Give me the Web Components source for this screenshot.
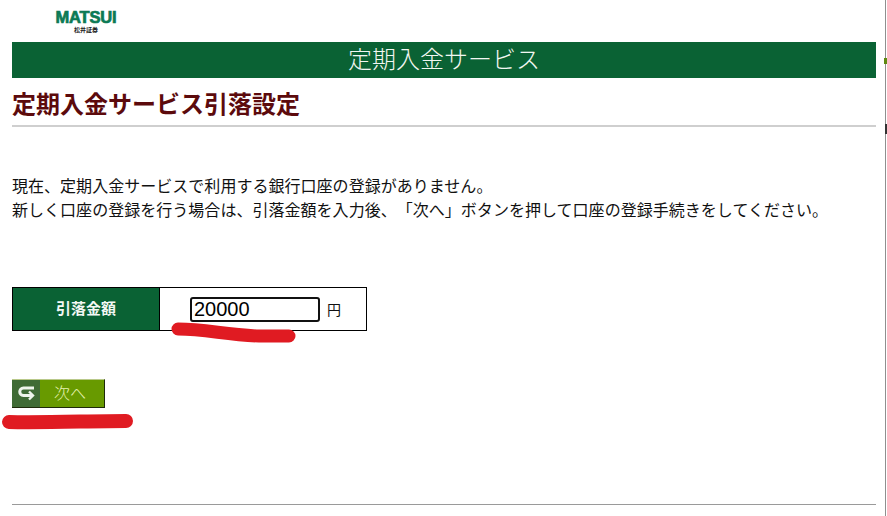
<!DOCTYPE html>
<html lang="ja">
<head>
<meta charset="utf-8">
<title>定期入金サービス引落設定</title>
<style>
  html, body { margin: 0; background: #fff; }
  body { font-family: "Liberation Sans", "Noto Sans CJK JP", sans-serif; color: #111; overflow: hidden; }
</style>
</head>
<body>
<deposit-page>
  <matsui-logo></matsui-logo>
  <service-banner>定期入金サービス</service-banner>
  <section-title>定期入金サービス引落設定</section-title>
  <notice-text>
    現在、定期入金サービスで利用する銀行口座の登録がありません。<br>
    新しく口座の登録を行う場合は、引落金額を入力後、「次へ」ボタンを押して口座の登録手続きをしてください。
  </notice-text>
  <amount-form label="引落金額" value="20000" unit="円"></amount-form>
  <next-button>次へ</next-button>
</deposit-page>

<script>
class DepositPage extends HTMLElement {
  constructor() {
    super();
    this.attachShadow({ mode: 'open' });
    this.shadowRoot.innerHTML = `
      <style>
        :host { display: block; position: relative; width: 887px; height: 516px; box-sizing: border-box; padding: 0 11px 0 12px; text-spacing-trim: space-all; }
        .foot { position: absolute; left: 12px; right: 11px; top: 504px; height: 1px; background: #9a9a9a; }
        .edge { position: absolute; left: 885px; top: 0; width: 1px; height: 516px; background: #8f8f8f; }
        .blip { position: absolute; left: 884px; top: 58px; width: 3px; height: 6px; background: #5f8a10; }
        .blip2 { position: absolute; left: 885px; top: 124px; width: 2px; height: 10px; background: #333; }
      </style>
      <slot></slot>
      <div class="foot"></div>
      <div class="edge"></div>
      <div class="blip"></div>
      <div class="blip2"></div>
    `;
  }
}

class MatsuiLogo extends HTMLElement {
  constructor() {
    super();
    this.attachShadow({ mode: 'open' });
    this.shadowRoot.innerHTML = `
      <style>
        :host { display: flex; flex-direction: column; align-items: center; width: 62px; height: 42px; margin-left: 43px; box-sizing: border-box; padding-top: 9px; }
        .name { font: 900 16.500px/16px "Liberation Sans", sans-serif; color: #0c7a55; -webkit-text-stroke: .7px #0c7a55; letter-spacing: -.2px; }
        .sub { font: 700 6px/6px "Noto Sans CJK JP", sans-serif; color: #222; margin-top: 2px; }
      </style>
      <div class="name">MATSUI</div>
      <div class="sub">松井証券</div>
    `;
  }
}

class ServiceBanner extends HTMLElement {
  constructor() {
    super();
    this.attachShadow({ mode: 'open' });
    this.shadowRoot.innerHTML = `
      <style>
        :host { display: flex; align-items: center; justify-content: center; height: 36px; box-sizing: border-box; padding-bottom: 5px; background: #0a6234; color: #f2f7f2; font: 300 24px/31px "Noto Sans CJK JP", sans-serif; }
      </style>
      <slot></slot>
    `;
  }
}

class SectionTitle extends HTMLElement {
  constructor() {
    super();
    this.attachShadow({ mode: 'open' });
    this.shadowRoot.innerHTML = `
      <style>
        :host { display: block; height: 49px; box-sizing: border-box; border-bottom: 2px solid #cfcfcf; color: #5c0a0c; font: 700 24px/49px "Noto Sans CJK JP", sans-serif; }
      </style>
      <slot></slot>
    `;
  }
}

class NoticeText extends HTMLElement {
  constructor() {
    super();
    this.attachShadow({ mode: 'open' });
    this.shadowRoot.innerHTML = `
      <style>
        :host { display: block; margin-top: 46px; font: 400 16px/24px "Noto Sans CJK JP", sans-serif; letter-spacing: .03px; color: #111; white-space: nowrap; }
      </style>
      <slot></slot>
    `;
  }
}

class AmountForm extends HTMLElement {
  constructor() {
    super();
    this.attachShadow({ mode: 'open' });
    const label = this.getAttribute('label');
    const value = this.getAttribute('value');
    const unit = this.getAttribute('unit');
    this.shadowRoot.innerHTML = `
      <style>
        :host { display: block; position: relative; width: 355px; margin-top: 66px; }
        .row { display: flex; height: 44px; box-sizing: border-box; border: 1px solid #000; }
        .label { width: 146px; background: #0a6234; color: #f4f8f4; font: 700 15px/40px "Noto Sans CJK JP", sans-serif; text-align: center; border-right: 1px solid #000; }
        .cell { display: flex; align-items: center; gap: 7px; padding-left: 30px; font: 400 14px "Noto Sans CJK JP", sans-serif; }
        input { box-sizing: border-box; width: 130px; height: 25px; margin: 0; padding: 0 2px; border: 2px solid #111; border-radius: 3px; font: 400 20px "Liberation Sans", sans-serif; color: #000; outline: none; }
        svg { position: absolute; left: 159px; top: 34px; }
      </style>
      <div class="row">
        <div class="label">${label}</div>
        <div class="cell"><input type="text" value="${value}"><span>${unit}</span></div>
      </div>
      <svg width="130" height="24" viewBox="0 0 130 24"><path d="M7 8 C35 8 55 14 88 15 L118 15" fill="none" stroke="#e01b22" stroke-width="13" stroke-linecap="round"/></svg>
    `;
  }
}

class NextButton extends HTMLElement {
  constructor() {
    super();
    this.attachShadow({ mode: 'open' });
    this.shadowRoot.innerHTML = `
      <style>
        :host { display: block; position: relative; width: 93px; margin-top: 48px; }
        .btn { display: flex; height: 29px; box-sizing: border-box; border-top: 1px solid #b9c98a; border-right: 1px solid #1d2a0a; border-bottom: 1px solid #1d2a0a; }
        .ic { display: flex; align-items: center; justify-content: center; width: 28px; background: #3f6b35; }
        .txt { flex: 1; background: #689a00; color: #e6f2b0; font: 300 16px/24px "Noto Sans CJK JP", sans-serif; text-align: center; padding-right: 4px; }
        .mark { position: absolute; left: -11px; top: 33px; }
      </style>
      <div class="btn">
        <div class="ic"><svg width="17" height="15" viewBox="0 0 17 15"><path d="M16 2H5.500C.5 2 .5 9.500 5.500 9.500H14" fill="none" stroke="#eef4ec" stroke-width="3"/><path d="M11 5.500L15 9.500L11 13.500" fill="none" stroke="#eef4ec" stroke-width="2.400"/></svg></div>
        <div class="txt"><slot></slot></div>
      </div>
      <svg class="mark" width="134" height="20" viewBox="0 0 134 20"><path d="M8 10 C40 11 90 9 125 9" fill="none" stroke="#e01b22" stroke-width="14" stroke-linecap="round"/></svg>
    `;
  }
}

customElements.define('deposit-page', DepositPage);
customElements.define('matsui-logo', MatsuiLogo);
customElements.define('service-banner', ServiceBanner);
customElements.define('section-title', SectionTitle);
customElements.define('notice-text', NoticeText);
customElements.define('amount-form', AmountForm);
customElements.define('next-button', NextButton);
</script>
</body>
</html>
